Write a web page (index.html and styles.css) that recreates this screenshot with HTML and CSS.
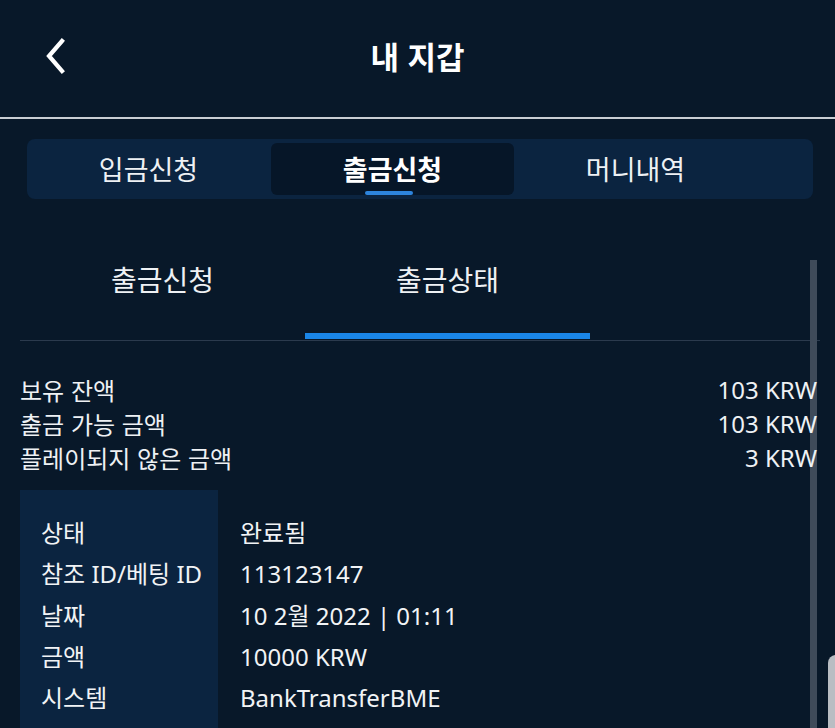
FILE: index.html
```html
<!DOCTYPE html>
<html lang="ko">
<head>
	<meta name="viewport" content="width=device-width, initial-scale=1.0">
	<link rel="stylesheet" href="styles.css">
	<title>내 지갑</title>
</head>
<body>
	<div class="header">
		<button class="back">
			<svg width="22" height="36" viewBox="0 0 22 36"><path d="M18 3 L5 18 L18 33" fill="none" stroke="#fff" stroke-width="4.2" stroke-linecap="square"/></svg>
		</button>
		<h1 class="title">내 지갑</h1>
	</div>

	<div class="tabs">
		<div class="tab">입금신청</div>
		<div class="tab active">출금신청</div>
		<div class="tab">머니내역</div>
	</div>

	<div class="content">
		<div class="scrollbar"></div>

		<div class="subtabs">
			<div class="subtab">출금신청</div>
			<div class="subtab active">출금상태</div>
		</div>

		<div class="balance">
			<div class="row"><span>보유 잔액</span><span>103 KRW</span></div>
			<div class="row"><span>출금 가능 금액</span><span>103 KRW</span></div>
			<div class="row"><span>플레이되지 않은 금액</span><span>3 KRW</span></div>
		</div>

		<div class="details">
			<div class="labels">
				<p>상태</p>
				<p>참조 ID/베팅 ID</p>
				<p>날짜</p>
				<p>금액</p>
				<p>시스템</p>
			</div>
			<div class="values">
				<p>완료됨</p>
				<p>113123147</p>
				<p>10 2월 2022 | 01:11</p>
				<p>10000 KRW</p>
				<p>BankTransferBME</p>
			</div>
		</div>
	</div>

	<div class="edge"></div>
</body>
</html>
```

FILE: styles.css
```css
*{
	margin: 0;
	padding: 0;
	box-sizing: border-box;
	font-family: "Noto Sans", "Noto Sans CJK KR", sans-serif;
}
body{
	background-color: #081829;
	color: #f2f4f6;
	width: 835px;
	height: 728px;
	overflow: hidden;
	position: relative;
}
.header{
	height: 119px;
	display: flex;
	align-items: center;
	justify-content: center;
	border-bottom: 2px solid #c9cdd3;
	position: relative;
	padding-bottom: 6px;
}
.back{
	position: absolute;
	left: 44px;
	top: 38px;
	background: none;
	border: 0;
	display: flex;
}
.title{
	font-size: 31px;
	font-weight: 700;
	color: #fff;
	font-family: "Noto Sans CJK KR", sans-serif;
}
.tabs{
	margin: 20px 22px 0 27px;
	height: 60px;
	background: #0b2440;
	border-radius: 8px;
	display: flex;
	padding: 4px 0;
}
.tab{
	width: 243px;
	display: flex;
	align-items: center;
	justify-content: center;
	font-size: 27px;
	font-family: "Noto Sans CJK KR", sans-serif;
	color: #eef1f4;
	padding-bottom: 2px;
	position: relative;
	border-radius: 6px;
}
.tab:first-child{
	margin-right: 1px;
}
.tab.active{
	background: #061628;
	font-weight: 700;
	color: #fff;
}
.tab.active::after{
	content: "";
	position: absolute;
	bottom: 0;
	left: 50%;
	width: 48px;
	margin-left: -28px;
	height: 4px;
	border-radius: 2px;
	background: #2d84dc;
}
.content{
	padding: 0 18px 0 20px;
	position: relative;
}
.subtabs{
	margin-top: 54px;
	display: flex;
	border-bottom: 1px solid #2b3a4d;
	margin-right: -3px;
}
.subtab{
	width: 285px;
	text-align: center;
	font-size: 28px;
	font-family: "Noto Sans CJK KR", sans-serif;
	height: 87px;
	padding-top: 6px;
	color: #eef1f4;
}
.subtab.active{
	border-bottom: 6px solid #1a86e8;
	height: 86px;
}
.balance{
	margin-top: 32px;
	position: relative;
}
.row{
	display: flex;
	justify-content: space-between;
	font-size: 24px;
	line-height: 34px;
	color: #eef1f4;
}
.row span:first-child{
	font-family: "Noto Sans CJK KR", sans-serif;
}
.details{
	margin-top: 15px;
	display: flex;
	font-size: 24px;
	color: #f1f3f5;
}
.details p{
	line-height: 41.3px;
}
.labels{
	width: 198px;
	background: #0b2440;
	padding: 22px 0 20px 21px;
}
.values{
	padding: 22px 0 0 22px;
}
.scrollbar{
	position: absolute;
	top: 7px;
	left: 810px;
	width: 7px;
	height: 480px;
	background: #3f4b5a;
}
.edge{
	position: absolute;
	left: 828px;
	top: 655px;
	width: 10px;
	height: 80px;
	background: #b9bdc3;
	border-top-left-radius: 8px;
}
```
